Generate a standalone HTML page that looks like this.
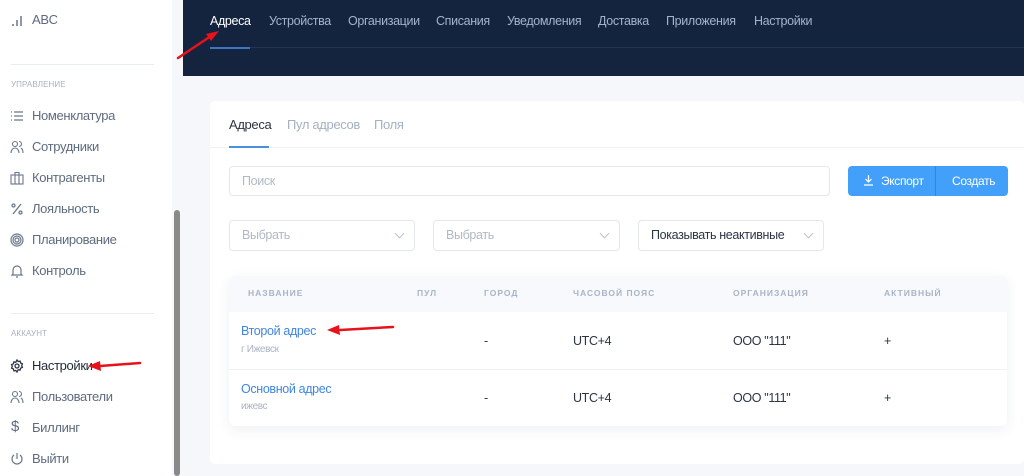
<!DOCTYPE html><html><head><meta charset="utf-8"><style>
*{margin:0;padding:0;box-sizing:border-box}
body{width:1024px;height:476px;overflow:hidden;background:#f5f7fa;font-family:"Liberation Sans",sans-serif;position:relative;font-size:13px;letter-spacing:-0.35px}
.a{position:absolute}
.sb{left:0;top:0;width:172px;height:476px;background:#fff}
.si{position:absolute;left:32px;color:#5e6b80;font-size:13px;line-height:16px}
.ic{position:absolute;left:10px;width:14px;height:14px}
.sec{position:absolute;left:11px;font-size:8px;color:#a9b2c1;letter-spacing:.1px}
.dv{position:absolute;left:11px;width:143px;height:1px;background:#e9edf3}
.nav{position:absolute;top:14px;font-size:12.5px;color:#a4b3cb}
.inp{position:absolute;background:#fff;border:1px solid #e3e7ee;border-radius:4px;color:#b1b9c6;font-size:12.5px;padding-left:12px}
.th{position:absolute;top:288px;font-size:8.5px;font-weight:bold;color:#a9b4c7;letter-spacing:1px}
.td{position:absolute;font-size:12.5px;color:#2b3445}
.chev{position:absolute;right:11px;top:9px;width:7px;height:7px;border-right:1px solid #bcc3cf;border-bottom:1px solid #bcc3cf;transform:rotate(45deg)}
</style></head><body>
<div class="a sb"></div>
<div class="a" style="left:174px;top:210px;width:6px;height:266px;background:#8a8a8a;border-radius:3px"></div>
<svg class="ic" style="top:14px" viewBox="0 0 14 14"><path d="M3 12v-2M7 12V6M11 12V2" stroke="#6b778a" stroke-width="1.5"/></svg>
<div class="si" style="top:12px">ABC</div>
<div class="dv" style="top:64px"></div>
<div class="sec" style="top:80px">УПРАВЛЕНИЕ</div>
<svg class="ic" style="top:109px" viewBox="0 0 14 14" fill="none" stroke="#6b778a" stroke-width="1.2"><path d="M1 3h1M1 7h1M1 11h1M4 3h9M4 7h9M4 11h9"/></svg>
<div class="si" style="top:108px">Номенклатура</div>
<svg class="ic" style="top:140px" viewBox="0 0 14 14" fill="none" stroke="#6b778a" stroke-width="1.1"><circle cx="5" cy="4" r="2.5"/><path d="M1 13c0-3 2-5 4-5s4 2 4 5M9 1.5a2.5 2.5 0 010 5M11 8c1.5 1 2 3 2 5"/></svg>
<div class="si" style="top:139px">Сотрудники</div>
<svg class="ic" style="top:171px" viewBox="0 0 14 14" fill="none" stroke="#6b778a" stroke-width="1.1"><rect x="1" y="4" width="12" height="9"/><path d="M5 4V1.5h4V4M5 4v9M9 4v9"/></svg>
<div class="si" style="top:170px">Контрагенты</div>
<svg class="ic" style="top:202px" viewBox="0 0 14 14" fill="none" stroke="#6b778a" stroke-width="1.3"><circle cx="3.5" cy="3.5" r="1.5"/><circle cx="10.5" cy="10.5" r="1.5"/><path d="M11 2L3 12"/></svg>
<div class="si" style="top:201px">Лояльность</div>
<svg class="ic" style="top:233px" viewBox="0 0 14 14" fill="none" stroke="#6b778a" stroke-width="1.2"><circle cx="7" cy="7" r="6"/><circle cx="7" cy="7" r="4"/><circle cx="7" cy="7" r="2"/></svg>
<div class="si" style="top:232px">Планирование</div>
<svg class="ic" style="top:264px" viewBox="0 0 14 14" fill="none" stroke="#6b778a" stroke-width="1.2"><path d="M3 10V6a4 4 0 018 0v4l1 1H2zM6 13h2"/></svg>
<div class="si" style="top:263px">Контроль</div>
<div class="dv" style="top:313px"></div>
<div class="sec" style="top:329px">АККАУНТ</div>
<svg class="ic" style="top:359px" viewBox="0 0 14 14" fill="none" stroke="#2b3445" stroke-width="1.3"><circle cx="7" cy="7" r="2"/><path d="M7 1l1.2 1.5 1.9-.4.5 1.9 1.8.8-.7 1.8.7 1.8-1.8.8-.5 1.9-1.9-.4L7 13l-1.2-1.5-1.9.4-.5-1.9-1.8-.8.7-1.8-.7-1.8 1.8-.8.5-1.9 1.9.4z"/></svg>
<div class="si" style="top:358px;color:#1f2937">Настройки</div>
<svg class="ic" style="top:390px" viewBox="0 0 14 14" fill="none" stroke="#6b778a" stroke-width="1.1"><circle cx="5" cy="4" r="2.5"/><path d="M1 13c0-3 2-5 4-5s4 2 4 5M9 1.5a2.5 2.5 0 010 5M11 8c1.5 1 2 3 2 5"/></svg>
<div class="si" style="top:389px">Пользователи</div>
<div class="si" style="top:419px;left:11px;font-size:15px">$</div>
<div class="si" style="top:420px">Биллинг</div>
<svg class="ic" style="top:452px" viewBox="0 0 14 14" fill="none" stroke="#6b778a" stroke-width="1.2"><path d="M7 1v6M4 3a5 5 0 106 0"/></svg>
<div class="si" style="top:451px">Выйти</div>

<div class="a" style="left:183px;top:0;width:841px;height:76px;background:#14243f"></div>
<div class="a" style="left:210px;top:47px;width:814px;height:1px;background:#223556"></div>
<div class="a" style="left:210px;top:47px;width:40px;height:2px;background:#3d74c4"></div>
<div class="nav" style="left:210px;color:#fff">Адреса</div>
<div class="nav" style="left:269px">Устройства</div>
<div class="nav" style="left:348px">Организации</div>
<div class="nav" style="left:436px">Списания</div>
<div class="nav" style="left:507px">Уведомления</div>
<div class="nav" style="left:598px">Доставка</div>
<div class="nav" style="left:666px">Приложения</div>
<div class="nav" style="left:754px">Настройки</div>

<div class="a" style="left:210px;top:101px;width:814px;height:363px;background:#fff;border-radius:5px"></div>
<div class="a" style="left:229px;top:117px;font-size:13px;color:#2b3445">Адреса</div>
<div class="a" style="left:287px;top:117px;font-size:13px;color:#a4b1c4">Пул адресов</div>
<div class="a" style="left:374px;top:117px;font-size:13px;color:#a4b1c4">Поля</div>
<div class="a" style="left:210px;top:147px;width:814px;height:1px;background:#eef1f5"></div>
<div class="a" style="left:229px;top:146px;width:40px;height:2px;background:#4a8fe0"></div>

<div class="inp" style="left:229px;top:166px;width:601px;height:30px;line-height:28px">Поиск</div>
<div class="a" style="left:848px;top:166px;width:160px;height:30px;background:#42a0fb;border-radius:4px"></div>
<div class="a" style="left:935px;top:166px;width:1px;height:30px;background:#2f86dc"></div>
<svg class="a" style="left:863px;top:174px" width="11" height="12" viewBox="0 0 11 12" fill="none" stroke="#fff" stroke-width="1.2"><path d="M5.5 1v7M2.5 5l3 3 3-3M1 11h9"/></svg>
<div class="a" style="left:881px;top:174px;color:#fff;font-size:12px">Экспорт</div>
<div class="a" style="left:952px;top:174px;color:#fff;font-size:12px">Создать</div>

<div class="inp" style="left:229px;top:220px;width:186px;height:31px;line-height:29px">Выбрать<span class="chev"></span></div>
<div class="inp" style="left:433px;top:220px;width:187px;height:31px;line-height:29px">Выбрать<span class="chev"></span></div>
<div class="inp" style="left:638px;top:220px;width:186px;height:31px;line-height:29px;color:#2b3445">Показывать неактивные<span class="chev"></span></div>

<div class="a" style="left:229px;top:276px;width:778px;height:150px;background:#fff;border-radius:6px;box-shadow:0 4px 14px rgba(30,50,90,.07)"></div>
<div class="a" style="left:229px;top:276px;width:778px;height:36px;background:#f7f9fc;border-radius:6px 6px 0 0"></div>
<div class="a" style="left:229px;top:369px;width:778px;height:1px;background:#eef1f5"></div>
<div class="th" style="left:248px">НАЗВАНИЕ</div>
<div class="th" style="left:417px">ПУЛ</div>
<div class="th" style="left:484px">ГОРОД</div>
<div class="th" style="left:573px">ЧАСОВОЙ ПОЯС</div>
<div class="th" style="left:733px">ОРГАНИЗАЦИЯ</div>
<div class="th" style="left:884px">АКТИВНЫЙ</div>

<div class="td" style="left:241px;top:324px;color:#3f86e0">Второй адрес</div>
<div class="td" style="left:241px;top:344px;font-size:10px;color:#a9b2c1">г Ижевск</div>
<div class="td" style="left:484px;top:334px">-</div>
<div class="td" style="left:573px;top:334px">UTC+4</div>
<div class="td" style="left:733px;top:334px">ООО "111"</div>
<div class="td" style="left:884px;top:334px">+</div>

<div class="td" style="left:241px;top:382px;color:#3f86e0">Основной адрес</div>
<div class="td" style="left:241px;top:401px;font-size:10px;color:#a9b2c1">ижевс</div>
<div class="td" style="left:484px;top:391px">-</div>
<div class="td" style="left:573px;top:391px">UTC+4</div>
<div class="td" style="left:733px;top:391px">ООО "111"</div>
<div class="td" style="left:884px;top:391px">+</div>

<svg class="a" style="left:0;top:0" width="1024" height="476" fill="#e8121b" stroke="#e8121b" stroke-width="2.5" stroke-linecap="round">
<path d="M178 58L208 38"/><path d="M219 31l-13 3 5 7z" stroke="none"/>
<path d="M140 363L100 366"/><path d="M88 366l12-5 1 10z" stroke="none"/>
<path d="M393 327L340 330"/><path d="M327 330l12-5 1 10z" stroke="none"/>
</svg>
</body></html>
